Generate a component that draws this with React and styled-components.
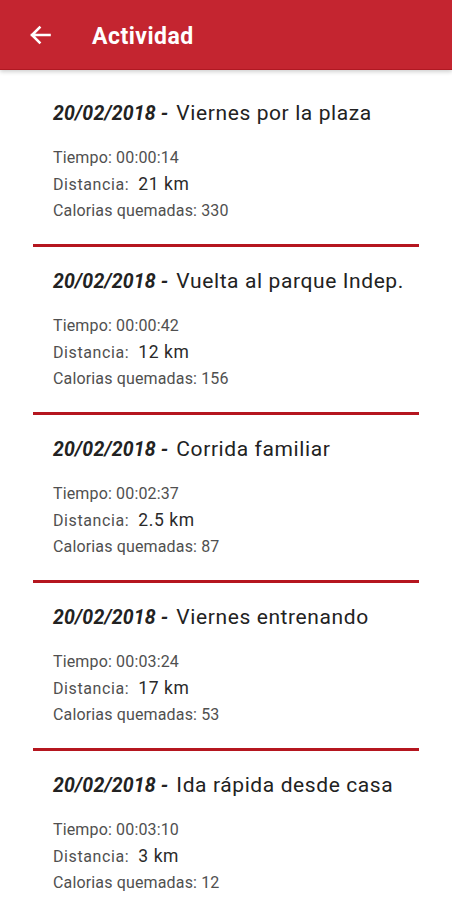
import React from 'react';
import styled, { createGlobalStyle } from 'styled-components';

const GlobalStyle = createGlobalStyle`
  body {
    margin: 0;
    background: #ffffff;
    font-family: Roboto, "Liberation Sans", sans-serif;
  }
`;

const activities = [
  { date: '20/02/2018', name: 'Viernes por la plaza', time: '00:00:14', km: '21', cal: 330 },
  { date: '20/02/2018', name: 'Vuelta al parque Indep.', time: '00:00:42', km: '12', cal: 156 },
  { date: '20/02/2018', name: 'Corrida familiar', time: '00:02:37', km: '2.5', cal: 87 },
  { date: '20/02/2018', name: 'Viernes entrenando', time: '00:03:24', km: '17', cal: 53 },
  { date: '20/02/2018', name: 'Ida rápida desde casa', time: '00:03:10', km: '3', cal: 12 },
];

const App = () => {
  return (
    <Screen>
      <GlobalStyle />
      <TopBar>
        <BackButton>
          <svg width="22" height="20" viewBox="0 0 22 20" fill="none">
            <path d="M20.5 10H3M10.5 2.5L3 10l7.5 7.5" stroke="#fff" strokeWidth="2.6" strokeLinecap="square" />
          </svg>
        </BackButton>
        <Title>Actividad</Title>
      </TopBar>
      <List>
        {activities.map((a, i) => (
          <Card key={i} last={i === activities.length - 1}>
            <CardTitle>
              <DateText>{a.date} -</DateText> {a.name}
            </CardTitle>
            <Details>
              <Detail>Tiempo: {a.time}</Detail>
              <Detail>
                <Label>Distancia:</Label>
                <Strong>{a.km} km</Strong>
              </Detail>
              <Detail>Calorias quemadas: {a.cal}</Detail>
            </Details>
          </Card>
        ))}
      </List>
    </Screen>
  );
};

const Screen = styled.div`
  width: 452px;
  min-height: 900px;
  background: #fff;
`;

const TopBar = styled.header`
  height: 69px;
  background: #c42530;
  border-bottom: 1px solid #b01822;
  box-shadow: 0 2px 4px rgba(0, 0, 0, 0.18);
  display: flex;
  align-items: center;
  padding-left: 29px;
  box-sizing: content-box;
`;

const BackButton = styled.div`
  width: 22px;
  height: 20px;
  display: flex;
  margin-top: 1px;
`;

const Title = styled.h1`
  margin: 3px 0 0 41px;
  color: #fff;
  font-size: 23px;
  font-weight: 700;
  letter-spacing: 0.5px;
`;

const List = styled.main`
  padding: 9px 33px 0;
`;

const Card = styled.section`
  padding: 20px 20px 20px;
  border-bottom: ${(p) => (p.last ? 'none' : '3px solid #b5161f')};
`;

const CardTitle = styled.div`
  font-size: 21px;
  line-height: 28px;
  letter-spacing: 0.6px;
  color: #222;
  white-space: nowrap;
`;

const DateText = styled.span`
  font-weight: 700;
  font-style: italic;
  font-size: 19.5px;
  letter-spacing: 0.2px;
  margin-right: 2px;
`;

const Details = styled.div`
  margin-top: 17px;
  display: flex;
  flex-direction: column;
`;

const Detail = styled.div`
  font-size: 16px;
  line-height: 26px;
  letter-spacing: 0.15px;
  color: #505050;
`;

const Label = styled.span`
  letter-spacing: 0.6px;
`;

const Strong = styled.span`
  margin-left: 9px;
  font-size: 17.5px;
  letter-spacing: 0.6px;
  color: #2a2a2a;
`;

export default App;
